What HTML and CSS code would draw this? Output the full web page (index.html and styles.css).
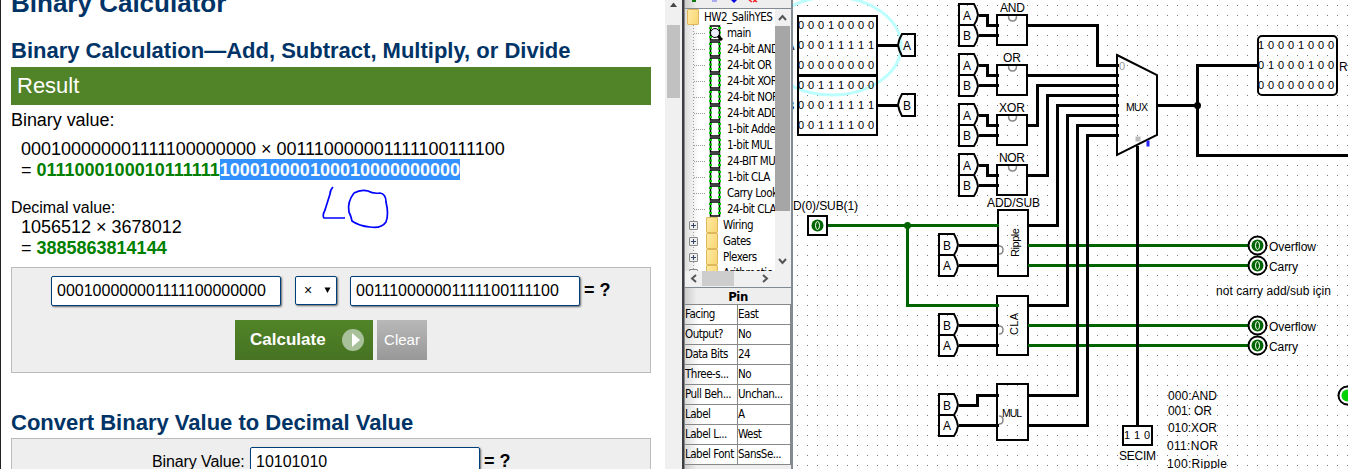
FILE: index.html
```
<!DOCTYPE html>
<html lang="en">
<head>
<meta charset="utf-8">
<title>Binary Calculator</title>
<link rel="stylesheet" href="styles.css">
</head>
<body>
<div class="desktop">
  <main class="calculator">
    <div class="content">
      <h1>Binary Calculator</h1>
      <h2>Binary Calculation—Add, Subtract, Multiply, or Divide</h2>
      <div class="result-bar">Result</div>
      <p class="label">Binary value:</p>
      <p class="line">000100000001111100000000 × 001110000001111100111100</p>
      <p class="line">= <b>0111000100010111111<mark>100010000100010000000000</mark></b></p>
      <p class="label small">Decimal value:</p>
      <p class="line">1056512 × 3678012</p>
      <p class="line">= <b>3885863814144</b></p>
      <form class="panel">
        <div class="fields">
          <span class="input">000100000001111100000000</span>
          <span class="select"><i>×</i><svg width="7" height="7"><path d="M0.500 0.500H6.500L3.500 6Z"/></svg></span>
          <span class="input">001110000001111100111100</span>
          <strong>= ?</strong>
        </div>
        <div class="buttons">
          <span class="calculate">Calculate<svg width="22" height="22"><circle cx="11" cy="11" r="11" fill="#a9c19a"/><path d="M10 4V18L18 11Z" fill="#fff"/></svg></span>
          <span class="clear">Clear</span>
        </div>
      </form>
      <h2 class="second">Convert Binary Value to Decimal Value</h2>
      <form class="panel decimal">
        <span class="field-label">Binary Value:</span>
        <span class="input">10101010</span>
        <strong>= ?</strong>
      </form>
    </div>
    <svg class="ink" width="70" height="42" viewBox="321 185 70 42"><path d="M333 187Q330 190 330 194L325 210Q322 216 324 218H345M354 193Q361 189 368 191Q373 194 380 193Q386 194 386 202Q389 214 386 222Q381 229 370 227Q359 226 352 221Q351 216 349 212Q347 202 354 193"/></svg>
    <div class="scrollbar"><svg width="9" height="5"><path d="M1 5L4.500 0.500L8 5Z"/></svg><div class="thumb"></div></div>
  </main>

  <aside class="sidebar">
    <div class="toolbar"><svg width="106" height="8" viewBox="685 0 106 8"><path d="M692 0h4v2h-4z" fill="#171"/><path d="M712 0h5v2h-5z" fill="#aae"/><path d="M731 0h6l-3 3z" fill="#00d"/><path d="M749 0l3 2M756 0l-3 2M754 0l3 2" stroke="#e22" stroke-width="1.500"/></svg></div>
    <div class="explorer">
      <div class="tree">
        <div class="row root"><i class="folder"></i>HW2_SalihYES</div>
        <div class="row"><svg class="chip"><use href="#chip"/><circle cx="6" cy="8" r="4.500" fill="#eef" stroke="#000"/><path d="M9 11l4 4" stroke="#000" stroke-width="3"/></svg>main</div>
        <div class="row"><svg class="chip"><use href="#chip"/></svg>24-bit AND</div>
        <div class="row"><svg class="chip"><use href="#chip"/></svg>24-bit OR</div>
        <div class="row"><svg class="chip"><use href="#chip"/></svg>24-bit XOR</div>
        <div class="row"><svg class="chip"><use href="#chip"/></svg>24-bit NOR</div>
        <div class="row"><svg class="chip"><use href="#chip"/></svg>24-bit ADD</div>
        <div class="row"><svg class="chip"><use href="#chip"/></svg>1-bit Adder</div>
        <div class="row"><svg class="chip"><use href="#chip"/></svg>1-bit MUL</div>
        <div class="row"><svg class="chip"><use href="#chip"/></svg>24-BIT MUL</div>
        <div class="row"><svg class="chip"><use href="#chip"/></svg>1-bit CLA</div>
        <div class="row"><svg class="chip"><use href="#chip"/></svg>Carry Look</div>
        <div class="row"><svg class="chip"><use href="#chip"/></svg>24-bit CLA</div>
        <div class="row lib"><i class="plus"></i><i class="folder"></i>Wiring</div>
        <div class="row lib"><i class="plus"></i><i class="folder"></i>Gates</div>
        <div class="row lib"><i class="plus"></i><i class="folder"></i>Plexers</div>
        <div class="row lib"><i class="plus"></i><i class="folder"></i>Arithmetic</div>
      </div>
      <div class="vbar"><svg width="15" height="17"><path d="M4 11L7.500 7L11 11"/></svg><div class="vthumb"></div><svg width="15" height="58"><path d="M4 48L7.500 52L11 48"/></svg></div>
    </div>
    <div class="hbar"><svg width="17" height="15"><path d="M11 4L7 7.500L11 11"/></svg><div class="hthumb"></div><svg width="55" height="15"><path d="M29 4L33 7.500L29 11"/></svg></div>
    <div class="prop-title">Pin</div>
    <div class="props">
      <span>Facing</span><span>East</span>
      <span>Output?</span><span>No</span>
      <span>Data Bits</span><span>24</span>
      <span>Three-s...</span><span>No</span>
      <span>Pull Beh...</span><span>Unchan...</span>
      <span>Label</span><span>A</span>
      <span>Label L...</span><span>West</span>
      <span>Label Font</span><span>SansSe...</span>
    </div>
  </aside>

  <svg class="circuit" width="555" height="469" viewBox="793 0 555 469">
    <defs>
      <pattern id="grid" x="797" y="5" width="10" height="10" patternUnits="userSpaceOnUse"><rect width="1" height="1" fill="#777"/></pattern>
      <g id="chip"><path d="M1.500 1H10.500V15H1.500Z" fill="#fff" stroke="#000" stroke-width="1.500"/><path d="M1.500 2V15M10.500 2V15" stroke="#0c0" stroke-width="3" stroke-dasharray="2 2.500"/></g>
      <path id="tunnel" d="M0 -11H15Q18 -6 19 0Q18 6 15 10H0Z"/>
      <path id="tunnel-left" d="M0 0Q1 -6 4 -11H17V11H4Q1 6 0 0Z"/>
      <g id="gate"><rect x="0" y="0" width="30" height="30"/><path class="notch" d="M11.500 1Q11.500 6 15.500 6Q19.500 6 19.500 1"/></g>
      <g id="probe"><circle r="9" fill="#fff" stroke="#000" stroke-width="2"/><circle r="6" fill="#006400"/><ellipse rx="2" ry="4" fill="none" stroke="#fff"/></g>
    </defs>
    <rect x="793" width="555" height="469" fill="url(#grid)"/>
    <ellipse class="mark" cx="832" cy="46" rx="69" ry="49"/>
    <g class="outline">
      <rect x="798" y="16" width="79" height="59"/><rect x="798" y="76" width="79" height="59"/>
      <rect x="1258" y="36" width="79" height="59" rx="4"/>
      <use href="#tunnel-left" x="898" y="45"/><use href="#tunnel-left" x="898" y="105"/>
      <use href="#tunnel" x="959" y="15"/><use href="#tunnel" x="959" y="36"/>
      <use href="#tunnel" x="959" y="65"/><use href="#tunnel" x="959" y="86"/>
      <use href="#tunnel" x="959" y="115"/><use href="#tunnel" x="959" y="136"/>
      <use href="#tunnel" x="959" y="165"/><use href="#tunnel" x="959" y="186"/>
      <use href="#tunnel" x="939" y="245"/><use href="#tunnel" x="939" y="266"/>
      <use href="#tunnel" x="939" y="325"/><use href="#tunnel" x="939" y="346"/>
      <use href="#tunnel" x="939" y="405"/><use href="#tunnel" x="939" y="426"/>
      <use href="#gate" x="997" y="15"/><use href="#gate" x="997" y="65"/><use href="#gate" x="997" y="115"/><use href="#gate" x="997" y="165"/>
      <path d="M998 210H1028V276H998ZM997 296H1028V355H997ZM997 384H1028V440H997Z"/>
      <path class="notch" d="M999 246Q1003 246 1003 250Q1003 254 999 254M999 326Q1003 326 1003 330Q1003 334 999 334M999 416Q1003 416 1003 420Q1003 424 999 424"/>
      <path d="M1117 55L1157 75V135L1117 155Z"/>
      <rect x="1123" y="426" width="29" height="19"/><rect x="808" y="216" width="19" height="19"/>
    </g>
    <g transform="translate(.5 .5)">
      <path class="green" d="M827 225H998M907 225V305H998M1027 245H1248M1027 265H1248M1027 325H1248M1027 345H1248"/>
      <path class="wire" d="M877 45H898M877 105H898M978 15H987V25H998M978 35H998M978 65H987V75H998M978 85H998M978 115H987V125H998M978 135H998M978 165H987V175H998M978 185H998M1027 25H1097V65H1118M1027 75H1118M1027 125H1037V85H1118M1027 175H1047V95H1118M1027 225H1057V105H1118M1027 305H1067V115H1118M1027 395H1077V125H1118M1027 425H1087V135H1118M958 245H998M958 265H998M958 325H998M958 345H998M958 405H977V395H998M958 425H998M1137 145V426M1157 105H1197M1258 65H1197V155H1348"/>
      <circle cx="1197" cy="105" r="3.500"/><circle cx="907" cy="225" r="3.500" fill="#006400"/>
      <rect x="1135" y="136" width="5" height="5" fill="#bbb"/><rect x="1146" y="140" width="3" height="6" fill="#22f"/>
      <use href="#probe" x="1257" y="245"/><use href="#probe" x="1257" y="265"/><use href="#probe" x="1257" y="325"/><use href="#probe" x="1257" y="345"/>
      <circle cx="817" cy="225" r="6" fill="#006400"/><ellipse cx="817" cy="225" rx="2" ry="4" fill="none" stroke="#fff"/>
      <circle cx="1347" cy="395" r="9" fill="#fff" stroke="#000" stroke-width="2"/><circle cx="1347" cy="395" r="6" fill="#00d200"/>
    </g>
    <g class="bits">
      <text y="29" x="798 808 818 828 838 848 858 868">00010000</text>
      <text y="49" x="798 808 818 828 838 848 858 868">00011111</text>
      <text y="69" x="798 808 818 828 838 848 858 868">00000000</text>
      <text y="89" x="798 808 818 828 838 848 858 868">00111000</text>
      <text y="109" x="798 808 818 828 838 848 858 868">00011111</text>
      <text y="129" x="798 808 818 828 838 848 858 868">00111100</text>
      <text y="49" x="1258 1268 1278 1288 1298 1308 1318 1328">10001000</text>
      <text y="69" x="1258 1268 1278 1288 1298 1308 1318 1328">01000100</text>
      <text y="89" x="1258 1268 1278 1288 1298 1308 1318 1328">00000000</text>
      <text y="439" x="1124 1134 1144">110</text>
      <text x="1119" y="70" fill="#999">0</text>
    </g>
    <g class="names">
      <text x="903" y="50">A</text><text x="903" y="110">B</text>
      <text x="963" y="20">A</text><text x="963" y="40">B</text>
      <text x="963" y="70">A</text><text x="963" y="90">B</text>
      <text x="963" y="120">A</text><text x="963" y="140">B</text>
      <text x="963" y="170">A</text><text x="963" y="190">B</text>
      <text x="943" y="250">B</text><text x="943" y="270">A</text>
      <text x="943" y="330">B</text><text x="943" y="350">A</text>
      <text x="943" y="410">B</text><text x="943" y="430">A</text>
      <text x="786.500" y="50">A</text><text x="786.500" y="110">B</text>
      <text x="1000" y="12" textLength="25">AND</text><text x="1003" y="62" textLength="18">OR</text>
      <text x="999" y="112" textLength="26">XOR</text><text x="999" y="162" textLength="26">NOR</text>
      <text x="987" y="207" textLength="53">ADD/SUB</text>
      <text x="793" y="210" textLength="65">D(0)/SUB(1)</text>
      <text x="1126" y="111" class="tiny" textLength="22">MUX</text>
      <text x="1002" y="417" class="tiny" textLength="20">MUL</text>
      <text class="side" transform="translate(1019 257) rotate(-90)" textLength="29">Ripple</text>
      <text class="side" transform="translate(1018 335) rotate(-90)" textLength="22">CLA</text>
      <text x="1269" y="251" textLength="47">Overflow</text><text x="1269" y="271" textLength="29">Carry</text>
      <text x="1269" y="331" textLength="47">Overflow</text><text x="1269" y="351" textLength="29">Carry</text>
      <text x="1216" y="295" textLength="115">not carry add/sub için</text>
      <text x="1119" y="460" textLength="37">SECIM</text>
      <text x="1168" y="400" textLength="49">000:AND</text><text x="1168" y="415" textLength="44">001: OR</text>
      <text x="1168" y="432" textLength="49">010:XOR</text><text x="1167" y="450" textLength="51">011:NOR</text>
      <text x="1167" y="468" textLength="60">100:Ripple</text>
      <text x="1339" y="71">R</text>
    </g>
  </svg>
</div>
</body>
</html>
```
FILE: styles.css
```
* { box-sizing: border-box; }
body { margin: 0; background: #fff; font-family: "Liberation Sans", Arial, sans-serif; color: #000; }
.desktop { display: flex; width: 1348px; height: 469px; overflow: hidden; }

/* Calculator page */
.calculator { position: relative; display: flex; justify-content: space-between; width: 684px; flex: none; height: 469px; overflow: hidden; border-left: 1px solid #222; border-right: 2px solid #3d3d46; }
.content { width: 640px; margin-left: 10px; flex: none; }
h1, h2, p { margin: 0; white-space: nowrap; }
h1 { margin-top: -12px; font-size: 26px; line-height: 30px; color: #036; }
h2 { margin-top: 19px; font-size: 22px; line-height: 28px; color: #036; }
.result-bar { height: 38px; margin-top: 2px; padding-left: 6px; background: #518428; color: #fff; font-size: 22px; line-height: 38px; }
.label { margin-top: 5px; font-size: 18px; line-height: 21px; letter-spacing: -.05px; }
.label + .line { margin-top: 7px; }
.line { padding-left: 10px; font-size: 18px; line-height: 23px; height: 21px; }
.line b { color: #008000; }
mark { display: inline-block; height: 21px; line-height: 22px; vertical-align: top; background: #3390ff; color: #fff; }
.label.small { margin-top: 19px; font-size: 16px; line-height: 18px; }
.label.small + .line { margin-top: -1px; }
.panel { height: 106px; margin-top: 9px; padding: 8px 0 0 39px; background: #eee; border: 1px solid #bbb; }
.fields { display: flex; height: 30px; }
.input { width: 230px; height: 30px; padding-left: 5px; background: #fff; border: 1px solid #003f7d; border-radius: 2px; box-shadow: 1px 1px 2px #666; font-size: 16px; line-height: 27px; }
.select { display: flex; align-items: center; width: 42px; height: 29px; margin: 0 13px 0 14px; padding-left: 8px; gap: 12px; background: #fff; border: 1px solid #003f7d; border-radius: 2px; box-shadow: 1px 1px 2px #666; }
.select i { font-size: 14px; font-style: normal; line-height: 27px; }
.panel strong { margin-left: 4px; font-size: 18px; line-height: 28px; }
.buttons { display: flex; gap: 4px; margin: 14px 0 0 184px; }
.calculate { display: flex; align-items: center; gap: 16px; width: 138px; height: 40px; padding-left: 15px; background: linear-gradient(#518428, #467222); color: #fff; font-size: 17px; font-weight: bold; }
.clear { width: 50px; height: 40px; background: linear-gradient(#b8b8b8, #989898); color: #fff; font-size: 15px; line-height: 39px; text-align: center; }
h2.second { margin-top: 36px; }
.decimal { display: flex; margin-top: 1px; padding-left: 140px; }
.field-label { width: 98px; font-size: 16px; line-height: 29px; letter-spacing: -.1px; }
.ink { position: absolute; left: 320px; top: 185px; overflow: visible; fill: none; stroke: #00f; stroke-width: 1.7; }
.scrollbar { width: 17px; height: 469px; padding: 2px 2px 0; background: #f0f0f0; }
.scrollbar svg { display: block; margin-left: 2px; fill: #444; }
.thumb { width: 13px; height: 73px; margin-top: 18px; background: #c1c1c1; }

/* Explorer and attribute table */
.sidebar { width: 109px; flex: none; height: 469px; background: linear-gradient(90deg, #ccc, #eee 12px); border-right: 2px solid #828a94; border-left: 1px solid #888; font: 11.5px "DejaVu Sans Condensed", "DejaVu Sans", sans-serif; letter-spacing: -.5px; overflow: hidden; white-space: nowrap; }
.toolbar { height: 9px; border-bottom: 1px solid #828a94; }
.toolbar svg { display: block; }
.explorer { display: flex; height: 262px; }
.tree { width: 90px; flex: none; overflow: hidden; background: radial-gradient(#999 .6px, transparent .8px) 7px 0 / 3px 3px repeat-y, linear-gradient(90deg, #ddd, #fff 14px); }
.row { display: flex; align-items: center; height: 16px; padding-left: 24px; }
.row:not(.root):not(.lib) { background: repeating-linear-gradient(90deg, #999 0 1px, transparent 1px 2px) 9px 8px / 12px 1px no-repeat; }
.row.root { padding-left: 2px; }
.chip { width: 14px; height: 16px; margin-right: 4px; flex: none; fill: none; overflow: hidden; }
.folder { width: 12px; height: 16px; margin-right: 5px; flex: none; background: linear-gradient(110deg, #ffe9a0, #f9d675); border: 1px solid #dfb85c; border-radius: 1px; }
.row.lib { padding-left: 4px; }
.plus { width: 9px; height: 9px; margin-right: 8px; flex: none; border: 1px solid #888; border-radius: 1px; background: linear-gradient(#346, #346) center / 5px 1px no-repeat, linear-gradient(#346, #346) center / 1px 5px no-repeat, #eee; }
.vbar { width: 16px; background: #f0f0f0; }
.vbar svg, .hbar svg { display: block; fill: none; stroke: #555; stroke-width: 2; }
.vthumb { width: 15px; height: 185px; background: #a6a6a6; }
.hbar { display: flex; height: 17px; background: #f0f0f0; border-bottom: 1px solid #828a94; }
.hthumb { width: 32px; height: 15px; background: #cdcdcd; }
.prop-title { height: 16px; line-height: 17px; text-align: center; font-size: 13px; font-weight: bold; letter-spacing: -.4px; }
.props { display: grid; grid-template-columns: 53px 53px; grid-auto-rows: 20px; width: 106px; border-top: 1px solid #888; background: linear-gradient(90deg, #ddd, #fff 14px); }
.props span { border-right: 1px solid #888; border-bottom: 1px solid #888; line-height: 19px; overflow: hidden; }

/* Circuit canvas */
.circuit { display: block; flex: none; background: #fff; font: 12px "Liberation Sans", Arial, sans-serif; }
.outline { fill: none; stroke: #000; stroke-width: 2; }
.notch { stroke: #888; stroke-width: 1.5; }
.wire, .green { fill: none; stroke: #000; stroke-width: 3; shape-rendering: crispEdges; }
.green { stroke: #006400; }
.mark { fill: none; stroke: #bff; stroke-width: 3; }
.bits { font-size: 11px; }
.tiny { font-size: 10.5px; }
.side { font-size: 11px; }
```
